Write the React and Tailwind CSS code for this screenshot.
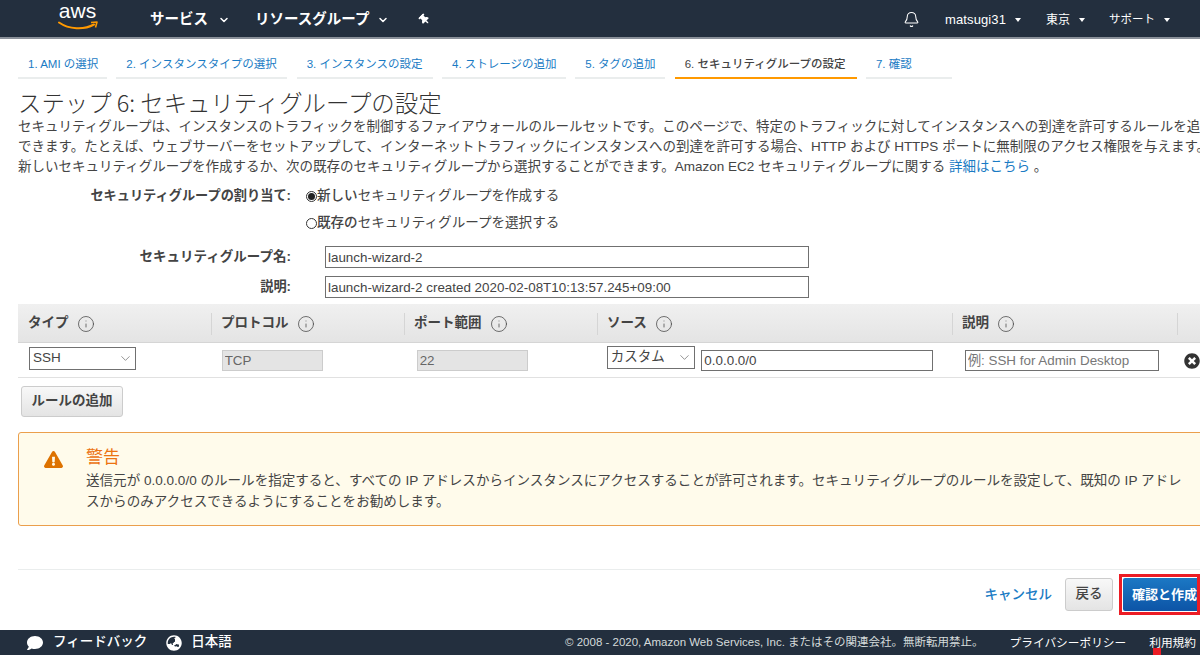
import { Bell, ChevronDown, Info } from "lucide-react";
import { FaComment, FaExclamationTriangle, FaGlobeAsia, FaThumbtack, FaTimesCircle } from "react-icons/fa";

const tabs = [
  { label: "1. AMI の選択", w: "w-[89px]" },
  { label: "2. インスタンスタイプの選択", w: "w-[171px]" },
  { label: "3. インスタンスの設定", w: "w-[136px]" },
  { label: "4. ストレージの追加", w: "w-[124px]" },
  { label: "5. タグの追加", w: "w-[90px]" },
  { label: "6. セキュリティグループの設定", w: "w-[182px]", active: true },
  { label: "7. 確認", w: "w-[86px]" },
];

function Caret() {
  return <span className="ml-[9px] h-0 w-0 border-x-[3.5px] border-t-[4px] border-x-transparent border-t-white" />;
}

function HeadCell({ label, className }) {
  return (
    <div className={"flex h-[22px] items-center gap-[8px] border-l border-[#d5d5d5] pl-[9px] " + className}>
      <span className="text-[13.5px] font-semibold text-[#444]">{label}</span>
      <Info size={18} strokeWidth={1} className="text-[#444]" />
    </div>
  );
}

function Select({ value, className }) {
  return (
    <div className={"relative " + className}>
      <select defaultValue={value} className="h-full w-full appearance-none rounded-none border border-[#707070] bg-white pb-[4px] pl-[3px] text-[13.5px] text-[#444] outline-none">
        <option>{value}</option>
      </select>
      <ChevronDown size={15} strokeWidth={1} className="pointer-events-none absolute right-[3px] top-[4px] text-[#555]" />
    </div>
  );
}

export default function App() {
  return (
    <div className="relative flex h-[655px] w-[1200px] flex-col overflow-hidden bg-white font-['Liberation_Sans','Noto_Sans_CJK_JP',sans-serif] text-[13.55px] text-[#444]">
      <header className="flex h-[39px] shrink-0 items-center border-b-2 border-[#8a9099] bg-[#232f3e] pt-[2px] text-white">
        <div className="ml-[57px] flex w-[41px] flex-col items-center">
          <span className="-mt-[6px] h-[19px] text-[21px] leading-[19px]">aws</span>
          <svg width="40" height="11" viewBox="0 0 40 11" className="mt-[1px]">
            <path d="M1 1.5C11 8.5 26 9 36 3.5" fill="none" stroke="#f90" strokeWidth="2" strokeLinecap="round" />
            <path d="M33 1.5L39 1 37.5 6.5" fill="none" stroke="#f90" strokeWidth="1.6" strokeLinejoin="round" />
          </svg>
        </div>
        <span className="ml-[52px] text-[14.5px] font-bold">サービス</span>
        <ChevronDown size={12} strokeWidth={3} className="ml-[10px]" />
        <span className="ml-[25px] text-[14.5px] font-bold">リソースグループ</span>
        <ChevronDown size={12} strokeWidth={3} className="ml-[8px]" />
        <FaThumbtack size={11} className="ml-[30px] -rotate-45" />
        <Bell size={17} strokeWidth={1.5} className="ml-auto" />
        <span className="ml-[25px] text-[13px] tracking-[0.1px]">matsugi31</span>
        <Caret />
        <span className="ml-[25px] text-[12px]">東京</span>
        <Caret />
        <span className="ml-[24px] text-[11.5px]">サポート</span>
        <span className="mr-[30px] flex items-center"><Caret /></span>
      </header>

      <nav className="ml-[18px] mt-[10px] flex gap-[9.33px]">
        {tabs.map((t) => (
          <div
            key={t.label}
            className={
              "h-[30px] whitespace-nowrap border-b-2 pl-[10px] pt-[6px] text-[11.5px] leading-[18px] " +
              t.w + " " +
              (t.active ? "border-[#f90] font-medium text-[#444]" : "border-[#eaeded] text-[#1a7bc4]")
            }
          >
            {t.label}
          </div>
        ))}
      </nav>

      <h1 className="mb-[2px] ml-[18px] mt-[10px] h-[26px] whitespace-nowrap font-['Noto_Sans_CJK_JP','Liberation_Sans',sans-serif] text-[23.4px] font-light leading-[26px] text-[#333]">
        ステップ 6: セキュリティグループの設定
      </h1>

      <div className="ml-[18px] whitespace-nowrap text-[13.5px] leading-[20px]">
        <p>セキュリティグループは、インスタンスのトラフィックを制御するファイアウォールのルールセットです。このページで、特定のトラフィックに対してインスタンスへの到達を許可するルールを追</p>
        <p>できます。たとえば、ウェブサーバーをセットアップして、インターネットトラフィックにインスタンスへの到達を許可する場合、HTTP および HTTPS ポートに無制限のアクセス権限を与えます。</p>
        <p>新しいセキュリティグループを作成するか、次の既存のセキュリティグループから選択することができます。Amazon EC2 セキュリティグループに関する <span className="text-[#1a7bc4]">詳細はこちら</span> 。</p>
      </div>

      <div className="mt-[5px] flex h-[28px] items-center">
        <span className="w-[291px] text-right text-[13.2px] font-semibold">セキュリティグループの割り当て:</span>
        <span className="ml-[15px] flex h-[11px] w-[11px] items-center justify-center rounded-full border border-[#333]">
          <span className="h-[7px] w-[7px] rounded-full bg-[#222]" />
        </span>
        <span><span className="font-medium">新しい</span>セキュリティグループを作成する</span>
      </div>
      <div className="flex h-[27px] items-center pl-[306px]">
        <span className="h-[11px] w-[11px] rounded-full border border-[#333]" />
        <span><span className="font-medium">既存の</span>セキュリティグループを選択する</span>
      </div>

      <div className="mt-[9px] flex h-[22px] items-center">
        <span className="w-[291px] text-right text-[13.5px] font-semibold">セキュリティグループ名:</span>
        <input defaultValue="launch-wizard-2" className="ml-[34px] h-[22px] w-[484px] border border-[#707070] px-[2px] text-[13.4px] outline-none" />
      </div>
      <div className="mt-[8px] flex h-[22px] items-center">
        <span className="w-[291px] text-right text-[13.2px] font-semibold">説明:</span>
        <input defaultValue="launch-wizard-2 created 2020-02-08T10:13:57.245+09:00" className="ml-[34px] h-[22px] w-[484px] border border-[#707070] px-[2px] text-[13.4px] outline-none" />
      </div>

      <div className="mt-[6px] ml-[18px] flex h-[39px] items-center border-b border-[#d5d5d5] bg-gradient-to-b from-[#f0f0f0] to-[#e4e4e4] pt-[1px]">
        <div className="flex h-[22px] w-[193px] items-center gap-[8px] pl-[10px]">
          <span className="text-[13.5px] font-semibold text-[#444]">タイプ</span>
          <Info size={18} strokeWidth={1} className="text-[#444]" />
        </div>
        <HeadCell label="プロトコル" className="w-[193px]" />
        <HeadCell label="ポート範囲" className="w-[193px]" />
        <HeadCell label="ソース" className="w-[355px]" />
        <HeadCell label="説明" className="w-[225px]" />
        <div className="h-[22px] border-l border-[#d5d5d5]" />
      </div>

      <div className="ml-[18px] flex h-[35px] items-center border-b border-[#e1e1e1]">
        <Select value="SSH" className="ml-[11px] -mt-[3px] h-[23px] w-[107px]" />
        <input readOnly value="TCP" className="ml-[86px] h-[21px] w-[101px] border border-[#ccc] bg-[#e4e4e4] px-[2px] text-[13.4px] text-[#666] outline-none" />
        <input readOnly value="22" className="ml-[94px] h-[21px] w-[111px] border border-[#ccc] bg-[#e4e4e4] px-[2px] text-[13.4px] text-[#666] outline-none" />
        <Select value="カスタム" className="ml-[79px] -mt-[5px] h-[23px] w-[89px]" />
        <input defaultValue="0.0.0.0/0" className="ml-[6px] h-[21px] w-[232px] border border-[#707070] px-[2px] text-[13.4px] outline-none" />
        <input placeholder="例: SSH for Admin Desktop" className="ml-[32px] h-[21px] w-[195px] border border-[#707070] px-[2px] text-[13.4px] outline-none placeholder:text-[#777]" />
        <FaTimesCircle size={16} className="ml-[25px] mt-[1px] shrink-0 text-[#333]" />
      </div>

      <button className="ml-[21px] mt-[8px] h-[31px] w-[102px] rounded-[3px] border border-[#ccc] bg-gradient-to-b from-[#f8f8f8] to-[#e4e4e4] text-[13.5px] font-semibold text-[#444]">
        ルールの追加
      </button>

      <div className="ml-[18px] mt-[15px] flex h-[94px] w-[1200px] rounded-[3px] border border-[#eb9f4c] bg-[#fffbeb]">
        <FaExclamationTriangle size={19} className="ml-[25px] mt-[17px] text-[#dd7200]" />
        <div className="ml-[23px] mt-[14px] whitespace-nowrap">
          <div className="h-[23px] text-[17px] leading-[22px] text-[#ec7211]">警告</div>
          <p className="leading-[21px]">送信元が 0.0.0.0/0 のルールを指定すると、すべての IP アドレスからインスタンスにアクセスすることが許可されます。セキュリティグループのルールを設定して、既知の IP アドレ</p>
          <p className="leading-[21px]">スからのみアクセスできるようにすることをお勧めします。</p>
        </div>
      </div>

      <div className="ml-[18px] mt-[43px] flex h-[61px] items-start justify-end border-t border-[#eaeded]">
        <span className="mt-[15px] text-[13.5px] font-medium leading-[20px] text-[#1a7bc4]">キャンセル</span>
        <button className="ml-[13px] mt-[8px] h-[33px] w-[48px] rounded-[3px] border border-[#ccc] bg-gradient-to-b from-[#f8f8f8] to-[#e4e4e4] text-[13.5px] font-medium text-[#444]">戻る</button>
        <div className="ml-[6px] mt-[4px] border-[3px] border-[#ec1c24] py-[1px] pl-[1px]">
          <button className="block h-[33px] w-[74px] whitespace-nowrap rounded-l-[2px] bg-gradient-to-b from-[#1c78c4] to-[#0d54a6] pl-[9px] text-left text-[13px] font-bold text-white">確認と作成</button>
        </div>
      </div>

      <footer className="mt-auto flex h-[25px] shrink-0 items-center bg-[#232f3e] text-white">
        <FaComment size={16} className="ml-[27px]" />
        <span className="ml-[10px] text-[13.5px] font-medium">フィードバック</span>
        <FaGlobeAsia size={16} className="ml-[19px]" />
        <span className="ml-[9px] text-[13.5px] font-medium">日本語</span>
        <span className="ml-auto text-[11.5px] text-[#d5dbdb]">© 2008 - 2020, Amazon Web Services, Inc. またはその関連会社。無断転用禁止。</span>
        <span className="ml-[26px] text-[11.7px]">プライバシーポリシー</span>
        <span className="ml-[23px] mr-[4px] text-[11.7px]">利用規約</span>
      </footer>

      <span className="absolute bottom-0 left-[1153px] h-[7px] w-[8px] bg-[#ec1c24]" />
    </div>
  );
}
